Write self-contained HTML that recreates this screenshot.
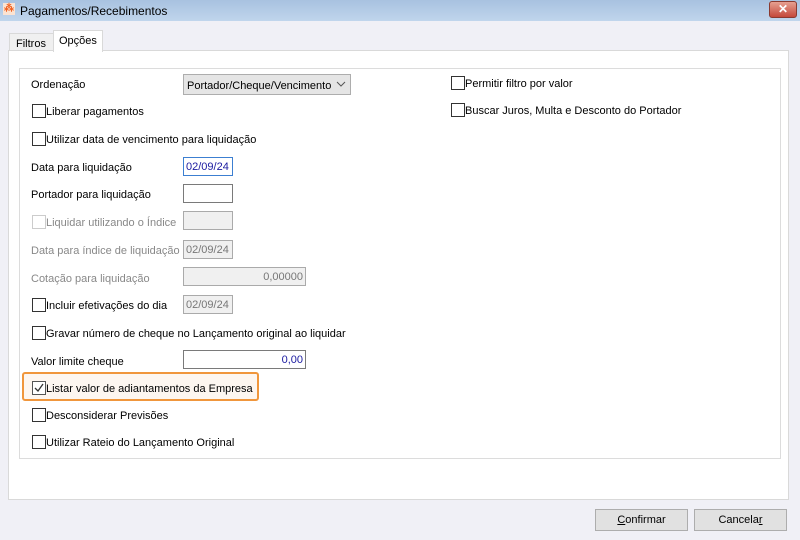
<!DOCTYPE html>
<html><head><style>
body{margin:0;width:800px;height:540px;background:#f0f0f6;font-family:"Liberation Sans",sans-serif;font-size:11px;color:#000;position:relative;overflow:hidden}
.a{position:absolute}
.title{left:0;top:0;width:800px;height:21px;background:linear-gradient(#a8c2e0,#c0d5ec);}
.lbl{position:absolute;white-space:nowrap;line-height:14px;margin-top:1px}
.cb{position:absolute;width:12px;height:12px;border:1px solid #333;background:#fff}
.in{position:absolute;height:19px;border:1px solid #7a7a7a;background:#fff;box-sizing:border-box;width:50px;font-size:11px;line-height:18px;padding:0 2px}
.dis{background:#f0f0f0;border-color:#aaa;color:#777}
.g{color:#888}
.btn{position:absolute;top:509px;height:22px;width:93px;border:1px solid #adadad;background:#e1e1e1;box-sizing:border-box;text-align:center;line-height:20px}
</style></head><body>
<div class="a title"></div>
<div class="a" style="left:3px;top:3px;width:12px;height:12px;background:#fbe3d2;color:#f06020;font-size:10px;line-height:12px;text-align:center;font-weight:bold">⁂</div>
<div class="lbl" style="left:20px;top:3px;font-size:12px">Pagamentos/Recebimentos</div>
<div class="a" style="left:769px;top:1px;width:28px;height:17px;background:linear-gradient(#e6a091,#c4483a);border:1px solid #8a3a30;border-radius:3px;box-sizing:border-box;color:#fff;font-weight:bold;text-align:center;line-height:15px;font-size:12px">✕</div>
<div class="a" style="left:9px;top:33px;width:44px;height:18px;background:#f0f0f0;border:1px solid #d9d9d9;border-bottom:none"></div>
<div class="lbl" style="left:16px;top:36px">Filtros</div>
<div class="a" style="left:53px;top:30px;width:48px;height:21px;background:#fff;border:1px solid #d9d9d9;border-bottom:none;z-index:2"></div>
<div class="lbl" style="left:59px;top:33px;z-index:3">Opções</div>
<div class="a" style="left:8px;top:50px;width:781px;height:450px;background:#fff;border:1px solid #d9d9d9;box-sizing:border-box"></div>
<div class="a" style="left:19px;top:68px;width:762px;height:391px;border:1px solid #dcdcdc;box-sizing:border-box"></div>

<div class="lbl" style="left:31px;top:77px">Ordenação</div>
<div class="a" style="left:183px;top:74px;width:168px;height:21px;background:#e5e5e5;border:1px solid #adadad;box-sizing:border-box"></div>
<div class="lbl" style="left:187px;top:78px">Portador/Cheque/Vencimento</div>
<svg class="a" style="left:336px;top:81px" width="10" height="6"><path d="M1 1 L5 5 L9 1" stroke="#555" fill="none"/></svg>

<div class="cb" style="left:32px;top:104px"></div><div class="lbl" style="left:46px;top:104px">Liberar pagamentos</div>
<div class="cb" style="left:32px;top:132px"></div><div class="lbl" style="left:46px;top:132px">Utilizar data de vencimento para liquidação</div>
<div class="lbl" style="left:31px;top:160px">Data para liquidação</div>
<div class="in" style="left:183px;top:157px;width:50px;color:#1a1aa0;border-color:#3c7fd1">02/09/24</div>
<div class="lbl" style="left:31px;top:187px">Portador para liquidação</div>
<div class="in" style="left:183px;top:184px"></div>
<div class="cb" style="left:32px;top:215px;border-color:#ccc"></div><div class="lbl g" style="left:46px;top:215px">Liquidar utilizando o Índice</div>
<div class="in dis" style="left:183px;top:211px"></div>
<div class="lbl g" style="left:31px;top:243px">Data para índice de liquidação</div>
<div class="in dis" style="left:183px;top:240px">02/09/24</div>
<div class="lbl g" style="left:31px;top:271px">Cotação para liquidação</div>
<div class="in dis" style="left:183px;top:267px;width:123px;text-align:right">0,00000</div>
<div class="cb" style="left:32px;top:298px"></div><div class="lbl" style="left:46px;top:298px">Incluir efetivações do dia</div>
<div class="in dis" style="left:183px;top:295px">02/09/24</div>
<div class="cb" style="left:32px;top:326px"></div><div class="lbl" style="left:46px;top:326px">Gravar número de cheque no Lançamento original ao liquidar</div>
<div class="lbl" style="left:31px;top:354px">Valor limite cheque</div>
<div class="in" style="left:183px;top:350px;width:123px;text-align:right;color:#1a1aa0">0,00</div>
<div class="a" style="left:22px;top:372px;width:237px;height:29px;border:2px solid #f0963c;border-radius:3px;background:#fdf6f0;box-sizing:border-box"></div>
<div class="cb" style="left:32px;top:381px;border-color:#555"></div>
<svg class="a" style="left:33px;top:382px" width="12" height="12"><path d="M2 6 L5 9 L10 2" stroke="#333" stroke-width="1.3" fill="none"/></svg>
<div class="lbl" style="left:46px;top:381px">Listar valor de adiantamentos da Empresa</div>
<div class="cb" style="left:32px;top:408px"></div><div class="lbl" style="left:46px;top:408px">Desconsiderar Previsões</div>
<div class="cb" style="left:32px;top:435px"></div><div class="lbl" style="left:46px;top:435px">Utilizar Rateio do Lançamento Original</div>

<div class="cb" style="left:451px;top:76px"></div><div class="lbl" style="left:465px;top:76px">Permitir filtro por valor</div>
<div class="cb" style="left:451px;top:103px"></div><div class="lbl" style="left:465px;top:103px">Buscar Juros, Multa e Desconto do Portador</div>

<div class="btn" style="left:595px"><u>C</u>onfirmar</div>
<div class="btn" style="left:694px">Cancela<u>r</u></div>
</body></html>
